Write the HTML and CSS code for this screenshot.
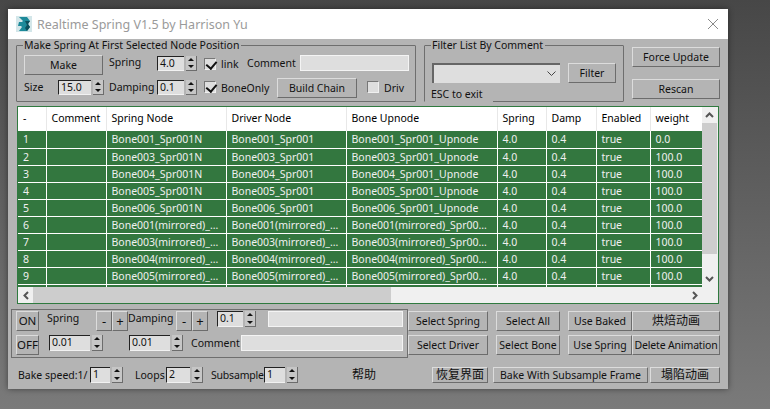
FILE: index.html
```html
<!DOCTYPE html>
<html lang="en">
<head>
    <meta charset="UTF-8">
    <title>Realtime Spring V1.5 by Harrison Yu</title>
    <link rel="stylesheet" href="styles.css">
</head>
<body>
    <div class="window">
        <header class="titlebar">
            <svg class="app-icon" width="16" height="16" viewBox="0 0 16 16">
                <rect width="16" height="16" fill="#d3e6e9"/>
                <path d="M3 1h8l3 4-2 3 2 3-3 4H3l3-4-1-1h-3l1-4h3l1-1z" fill="#1d8a9a"/>
                <path d="M9 5l5 0-2 3 2 3-3 4-2-3 2-3z" fill="#0d4f5c"/>
            </svg>
            <span class="title">Realtime Spring V1.5 by Harrison Yu</span>
            <svg class="close" width="10" height="10" viewBox="0 0 10 10">
                <path d="M0 0L10 10M10 0L0 10" stroke="#8a8a8a" stroke-width="1" fill="none"/>
            </svg>
        </header>

        <div class="content">
            <div class="top">
                <fieldset class="group make-group">
                    <legend>Make Spring At First Selected Node Position</legend>
                    <div class="row row-make">
                        <button class="btn make-btn">Make</button>
                        <span class="lbl lbl-spring">Spring</span>
                        <div class="spinner sp-40"><span class="val">4.0</span><span class="arrows"><i class="up"></i><i class="down"></i></span></div>
                        <span class="check checked"></span>
                        <span class="lbl lbl-link">link</span>
                        <span class="lbl lbl-comment">Comment</span>
                        <span class="field field-make"></span>
                    </div>
                    <div class="row row-size">
                        <span class="lbl lbl-size">Size</span>
                        <div class="spinner sp-46"><span class="val">15.0</span><span class="arrows"><i class="up"></i><i class="down"></i></span></div>
                        <span class="lbl lbl-damping">Damping</span>
                        <div class="spinner sp-40"><span class="val">0.1</span><span class="arrows"><i class="up"></i><i class="down"></i></span></div>
                        <span class="check checked"></span>
                        <span class="lbl lbl-boneonly">BoneOnly</span>
                        <button class="btn chain-btn">Build Chain</button>
                        <span class="check check-driv"></span>
                        <span class="lbl">Driv</span>
                    </div>
                </fieldset>

                <fieldset class="group filter-group">
                    <legend>Filter List By Comment</legend>
                    <div class="filter-row">
                        <div class="combo">
                            <svg width="9" height="6" viewBox="0 0 9 6"><path d="M0.5 0.5L4.5 4.5L8.5 0.5" stroke="#444" fill="none"/></svg>
                        </div>
                        <button class="btn filter-btn">Filter</button>
                    </div>
                    <span class="esc">ESC to exit</span>
                </fieldset>

                <div class="side-btns">
                    <button class="btn">Force Update</button>
                    <button class="btn">Rescan</button>
                </div>
            </div>

            <div class="list">
                <div class="table-wrap">
                    <table class="spring-table">
                        <colgroup>
                            <col class="c-id"><col class="c-comment"><col class="c-node"><col class="c-node"><col class="c-upnode"><col class="c-spring"><col class="c-damp"><col class="c-enabled"><col class="c-weight">
                        </colgroup>
                        <thead>
                            <tr><th>-</th><th>Comment</th><th>Spring Node</th><th>Driver Node</th><th>Bone Upnode</th><th>Spring</th><th>Damp</th><th>Enabled</th><th>weight</th></tr>
                        </thead>
                        <tbody>
                            <tr><td>1</td><td></td><td>Bone001_Spr001N</td><td>Bone001_Spr001</td><td>Bone001_Spr001_Upnode</td><td>4.0</td><td>0.4</td><td>true</td><td>0.0</td></tr>
                            <tr><td>2</td><td></td><td>Bone003_Spr001N</td><td>Bone003_Spr001</td><td>Bone003_Spr001_Upnode</td><td>4.0</td><td>0.4</td><td>true</td><td>100.0</td></tr>
                            <tr><td>3</td><td></td><td>Bone004_Spr001N</td><td>Bone004_Spr001</td><td>Bone004_Spr001_Upnode</td><td>4.0</td><td>0.4</td><td>true</td><td>100.0</td></tr>
                            <tr><td>4</td><td></td><td>Bone005_Spr001N</td><td>Bone005_Spr001</td><td>Bone005_Spr001_Upnode</td><td>4.0</td><td>0.4</td><td>true</td><td>100.0</td></tr>
                            <tr><td>5</td><td></td><td>Bone006_Spr001N</td><td>Bone006_Spr001</td><td>Bone006_Spr001_Upnode</td><td>4.0</td><td>0.4</td><td>true</td><td>100.0</td></tr>
                            <tr><td>6</td><td></td><td>Bone001(mirrored)_…</td><td>Bone001(mirrored)_…</td><td>Bone001(mirrored)_Spr00…</td><td>4.0</td><td>0.4</td><td>true</td><td>100.0</td></tr>
                            <tr><td>7</td><td></td><td>Bone003(mirrored)_…</td><td>Bone003(mirrored)_…</td><td>Bone003(mirrored)_Spr00…</td><td>4.0</td><td>0.4</td><td>true</td><td>100.0</td></tr>
                            <tr><td>8</td><td></td><td>Bone004(mirrored)_…</td><td>Bone004(mirrored)_…</td><td>Bone004(mirrored)_Spr00…</td><td>4.0</td><td>0.4</td><td>true</td><td>100.0</td></tr>
                            <tr><td>9</td><td></td><td>Bone005(mirrored)_…</td><td>Bone005(mirrored)_…</td><td>Bone005(mirrored)_Spr00…</td><td>4.0</td><td>0.4</td><td>true</td><td>100.0</td></tr>
                            <tr><td></td><td></td><td></td><td></td><td></td><td></td><td></td><td></td><td></td></tr>
                        </tbody>
                    </table>
                </div>
                <div class="vscroll">
                    <span class="sb-btn"><svg width="9" height="6" viewBox="0 0 9 6"><path d="M1 5L4.5 1.5L8 5" stroke="#555" stroke-width="2" fill="none"/></svg></span>
                    <span class="v-thumb"></span>
                    <span class="sb-btn sb-end"><svg width="9" height="6" viewBox="0 0 9 6"><path d="M1 1L4.5 4.5L8 1" stroke="#555" stroke-width="2" fill="none"/></svg></span>
                </div>
                <div class="hscroll">
                    <span class="sb-btn"><svg width="6" height="9" viewBox="0 0 6 9"><path d="M5 1L1.5 4.5L5 8" stroke="#555" stroke-width="2" fill="none"/></svg></span>
                    <span class="h-thumb"></span>
                    <span class="sb-btn sb-end"><svg width="6" height="9" viewBox="0 0 6 9"><path d="M1 1L4.5 4.5L1 8" stroke="#555" stroke-width="2" fill="none"/></svg></span>
                </div>
            </div>

            <div class="lower">
                <div class="edit-panel">
                    <div class="row row-edit">
                        <button class="btn onoff">ON</button>
                        <span class="lbl lbl-edit-spring">Spring</span>
                        <button class="btn pm">-</button>
                        <button class="btn pm">+</button>
                        <span class="lbl lbl-edit-damping">Damping</span>
                        <button class="btn pm">-</button>
                        <button class="btn pm">+</button>
                        <div class="spinner sp-39 sp-edit"><span class="val">0.1</span><span class="arrows"><i class="up"></i><i class="down"></i></span></div>
                        <span class="field field-edit"></span>
                    </div>
                    <div class="row row-edit">
                        <button class="btn onoff">OFF</button>
                        <div class="spinner sp-54 sp-first"><span class="val">0.01</span><span class="arrows"><i class="up"></i><i class="down"></i></span></div>
                        <div class="spinner sp-54 sp-second"><span class="val">0.01</span><span class="arrows"><i class="up"></i><i class="down"></i></span></div>
                        <span class="lbl lbl-edit-comment">Comment</span>
                        <span class="field field-comment"></span>
                    </div>
                </div>
                <div class="action-grid">
                    <button class="btn">Select Spring</button>
                    <button class="btn">Select All</button>
                    <button class="btn">Use Baked</button>
                    <button class="btn cjk">烘焙动画</button>
                    <button class="btn">Select Driver</button>
                    <button class="btn">Select Bone</button>
                    <button class="btn">Use Spring</button>
                    <button class="btn btn-tight">Delete Animation</button>
                </div>
            </div>

            <div class="bottom">
                <span class="lbl lbl-bake">Bake speed:1/</span>
                <div class="spinner sp-33"><span class="val">1</span><span class="arrows"><i class="up"></i><i class="down"></i></span></div>
                <span class="lbl lbl-loops">Loops</span>
                <div class="spinner sp-37"><span class="val">2</span><span class="arrows"><i class="up"></i><i class="down"></i></span></div>
                <span class="lbl lbl-sub">Subsample</span>
                <div class="spinner sp-34"><span class="val">1</span><span class="arrows"><i class="up"></i><i class="down"></i></span></div>
                <span class="lbl cjk lbl-help">帮助</span>
                <button class="btn cjk btn-restore">恢复界面</button>
                <button class="btn btn-bake">Bake With Subsample Frame</button>
                <button class="btn cjk btn-collapse">塌陷动画</button>
            </div>
        </div>
    </div>
</body>
</html>
```

FILE: styles.css
```css
* {
    box-sizing: border-box;
}

html, body {
    height: 100%;
}

body {
    margin: 0;
    padding: 9px 0 0 8px;
    overflow: hidden;
    background: linear-gradient(180deg, #474747 0%, #7a7a7a 100%);
    font-family: "Noto Sans", "Noto Sans CJK SC", sans-serif;
    font-size: 10.5px;
    color: #111;
}

.window {
    width: 720px;
    height: 380px;
    background-color: #b4b4b4;
    box-shadow: 0 0 6px rgba(0, 0, 0, 0.45);
}

.titlebar {
    display: flex;
    align-items: center;
    height: 30px;
    padding: 0 9px 0 8px;
    background-color: #ffffff;
}

.app-icon {
    flex: none;
}

.title {
    margin-left: 5px;
    font-size: 12.5px;
    color: #9a9a9a;
}

.close {
    margin-left: auto;
    margin-right: 1px;
}

.content {
    padding: 0 8px;
}

/* top groups */
.top {
    display: flex;
    height: 67px;
}

.group {
    margin: 0;
    padding: 0;
    height: 63px;
    border: 1px solid #6e6e6e;
    border-radius: 1px;
    min-width: 0;
}

.group legend {
    margin-left: 6px;
    padding: 0 2px 0 1px;
    font-size: 10.5px;
    line-height: 13px;
}

.make-group {
    width: 400px;
}

.filter-group {
    position: relative;
    width: 200px;
    margin-left: 8px;
}

.row {
    display: flex;
    align-items: center;
}

.row-make {
    height: 20px;
    margin-top: 3px;
    padding-left: 7px;
}

.row-size {
    height: 20px;
    margin-top: 3px;
    padding-left: 7px;
}

.row-make .spinner {
    height: 15px;
    margin-top: -3px;
}

.row-size .spinner {
    height: 15px;
    margin-top: -1px;
}

.row-make .check,
.row-size .check {
    margin-top: -2px;
}

.lbl {
    white-space: nowrap;
    line-height: 14px;
}

.btn {
    height: 20px;
    padding: 0;
    font: inherit;
    line-height: 1;
    color: #111;
    background-color: #b4b4b4;
    border: 1px solid;
    border-color: #dcdcdc #6c6c6c #6c6c6c #dcdcdc;
    white-space: nowrap;
}

.btn-tight {
    letter-spacing: -0.15px;
}

.make-btn {
    width: 79px;
}

.lbl-spring {
    width: 48px;
    margin-left: 6px;
    margin-top: -6px;
}

.lbl-size {
    width: 34px;
    margin-top: -3px;
}

.lbl-damping {
    width: 48px;
    margin-left: 5px;
    margin-top: -3px;
}

.lbl-link {
    width: 26px;
    margin-left: 5px;
    margin-top: -2px;
}

.lbl-comment {
    width: 53px;
    margin-top: -4px;
}

.lbl-boneonly {
    width: 56px;
    margin-left: 5px;
    margin-top: -1px;
}

.spinner {
    display: flex;
    flex: none;
    height: 16px;
}

.val {
    flex: 1;
    padding-left: 2px;
    line-height: 13px;
    background-color: #dedede;
    border-top: 1px solid #222;
    border-left: 1px solid #222;
    border-bottom: 1px solid #f2f2f2;
}

.arrows {
    display: flex;
    flex-direction: column;
    width: 11px;
    margin-left: 2px;
    border-right: 1px solid #6c6c6c;
    border-bottom: 1px solid #6c6c6c;
}

.arrows i {
    flex: 1;
    position: relative;
    background-color: #c6c6c6;
}

.arrows i::after {
    content: "";
    position: absolute;
    left: 2px;
    top: 2px;
    border-left: 3px solid transparent;
    border-right: 3px solid transparent;
}

.arrows .up::after {
    border-bottom: 3px solid #111;
}

.arrows .down::after {
    border-top: 3px solid #111;
}

.sp-33 { width: 33px; }
.sp-34 { width: 34px; }
.sp-37 { width: 37px; }
.sp-39 { width: 39px; }
.sp-40 { width: 40px; }
.sp-46 { width: 46px; }
.sp-54 { width: 54px; }

.check {
    flex: none;
    position: relative;
    width: 12px;
    height: 12px;
    margin-left: 7px;
    background-color: #dedede;
    border: 1px solid;
    border-color: #777 #f0f0f0 #f0f0f0 #777;
}

.checked::after {
    content: "";
    position: absolute;
    left: 3px;
    top: 0;
    width: 5px;
    height: 8px;
    border-right: 2px solid #111;
    border-bottom: 2px solid #111;
    transform: rotate(40deg);
}

.check-driv {
    margin-left: 10px;
    margin-right: 5px;
}

.chain-btn {
    width: 80px;
}

.field {
    height: 16px;
    background-color: #dedede;
    border: 1px solid #f4f4f4;
}

.field-make {
    width: 109px;
    margin-top: -4px;
}

.filter-row {
    display: flex;
    align-items: center;
    margin-top: 11px;
    padding-left: 7px;
}

.combo {
    display: flex;
    align-items: center;
    justify-content: flex-end;
    width: 128px;
    height: 20px;
    padding-right: 4px;
    background-color: #dedede;
    border-top: 2px solid #666;
    border-left: 2px solid #666;
}

.filter-btn {
    width: 48px;
    margin-left: 8px;
}

.esc {
    display: block;
    width: 68px;
    margin-top: 3px;
    padding-left: 6px;
    line-height: 16px;
    background-color: #b4b4b4;
}

.side-btns {
    display: flex;
    flex-direction: column;
    gap: 12px;
    width: 88px;
    margin-left: 8px;
    padding-top: 8px;
}

/* list */
.list {
    display: grid;
    grid-template-columns: 684px 15px;
    grid-template-rows: 180px 16px;
    width: 702px;
    height: 198px;
    margin-left: 1px;
    background-color: #f0f0f0;
    border: 1px solid #2f7a3f;
}

.table-wrap {
    overflow: hidden;
    background-color: #ffffff;
}

.spring-table {
    width: 684px;
    border-collapse: collapse;
    table-layout: fixed;
}

.c-id { width: 28px; }
.c-comment { width: 60px; }
.c-node { width: 120px; }
.c-upnode { width: 151px; }
.c-spring { width: 49px; }
.c-damp { width: 50px; }
.c-enabled { width: 54px; }
.c-weight { width: 52px; }

.spring-table th {
    height: 24px;
    padding: 0 0 2px 5px;
    font-weight: normal;
    text-align: left;
    color: #000;
    background-color: #ffffff;
    border-right: 1px solid #e8e8e8;
}

.spring-table th:last-child {
    border-right: 0;
}

.spring-table td {
    height: 17px;
    padding: 1px 0 0 5px;
    line-height: 15px;
    color: #f0f0f0;
    background-color: #33773f;
    border-right: 1px solid #ffffff;
    border-bottom: 1px solid #ffffff;
    white-space: nowrap;
    overflow: hidden;
}

.spring-table td:last-child {
    border-right: 0;
}

.vscroll {
    display: flex;
    flex-direction: column;
    grid-row: 1;
    grid-column: 2;
}

.hscroll {
    display: flex;
    grid-row: 2;
    grid-column: 1 / span 2;
}

.sb-btn {
    display: flex;
    flex: none;
    align-items: center;
    justify-content: center;
    width: 15px;
    height: 16px;
}

.sb-end {
    margin-top: auto;
}

.hscroll .sb-end {
    margin-top: 0;
    margin-left: auto;
    margin-right: 15px;
}

.v-thumb {
    width: 15px;
    height: 131px;
    background-color: #cdcdcd;
}

.h-thumb {
    width: 358px;
    height: 16px;
    background-color: #cdcdcd;
}

/* lower panel */
.lower {
    display: flex;
    margin-top: 5px;
    margin-left: -5px;
}

.edit-panel {
    display: flex;
    flex-direction: column;
    gap: 4px;
    width: 397px;
    height: 49px;
    padding: 1px 0 0 4px;
    border: 1px solid #6e6e6e;
}

.row-edit {
    height: 20px;
}

.onoff {
    width: 23px;
    font-size: 11.5px;
}

.pm {
    width: 16px;
    font-size: 13px;
}

.lbl-edit-spring {
    width: 49px;
    margin-left: 8px;
    margin-top: -6px;
}

.lbl-edit-damping {
    width: 48px;
    margin-top: -6px;
}

.sp-edit {
    margin-left: 9px;
    margin-top: -4px;
}

.field-edit {
    width: 135px;
    margin-left: 12px;
    margin-top: -4px;
}

.sp-first {
    margin-left: 10px;
    margin-top: -4px;
}

.sp-second {
    margin-left: 26px;
    margin-top: -4px;
}

.lbl-edit-comment {
    width: 50px;
    margin-left: 8px;
    margin-top: -4px;
}

.field-comment {
    width: 162px;
    margin-top: -4px;
}

.action-grid {
    display: grid;
    grid-template-columns: 80px 72px 72px 88px;
    grid-auto-rows: 20px;
    row-gap: 4px;
    width: 312px;
    margin-top: 2px;
}

.action-grid .btn:nth-child(4n+2),
.action-grid .btn:nth-child(4n+3) {
    margin-left: 8px;
}

.cjk {
    font-size: 12px;
}

/* bottom row */
.bottom {
    display: flex;
    align-items: center;
    height: 16px;
    margin-top: 9px;
    padding-left: 2px;
}

.bottom .btn {
    height: 16px;
}

.lbl-bake {
    width: 72px;
}

.lbl-loops {
    width: 31px;
    margin-left: 12px;
}

.lbl-sub {
    width: 53px;
    margin-left: 8px;
    letter-spacing: -0.2px;
}

.lbl-help {
    width: 80px;
    margin-left: 54px;
}

.btn-restore {
    width: 56px;
}

.btn-bake {
    width: 155px;
    margin-left: 5px;
}

.btn-collapse {
    width: 70px;
    margin-left: 2px;
}
```
